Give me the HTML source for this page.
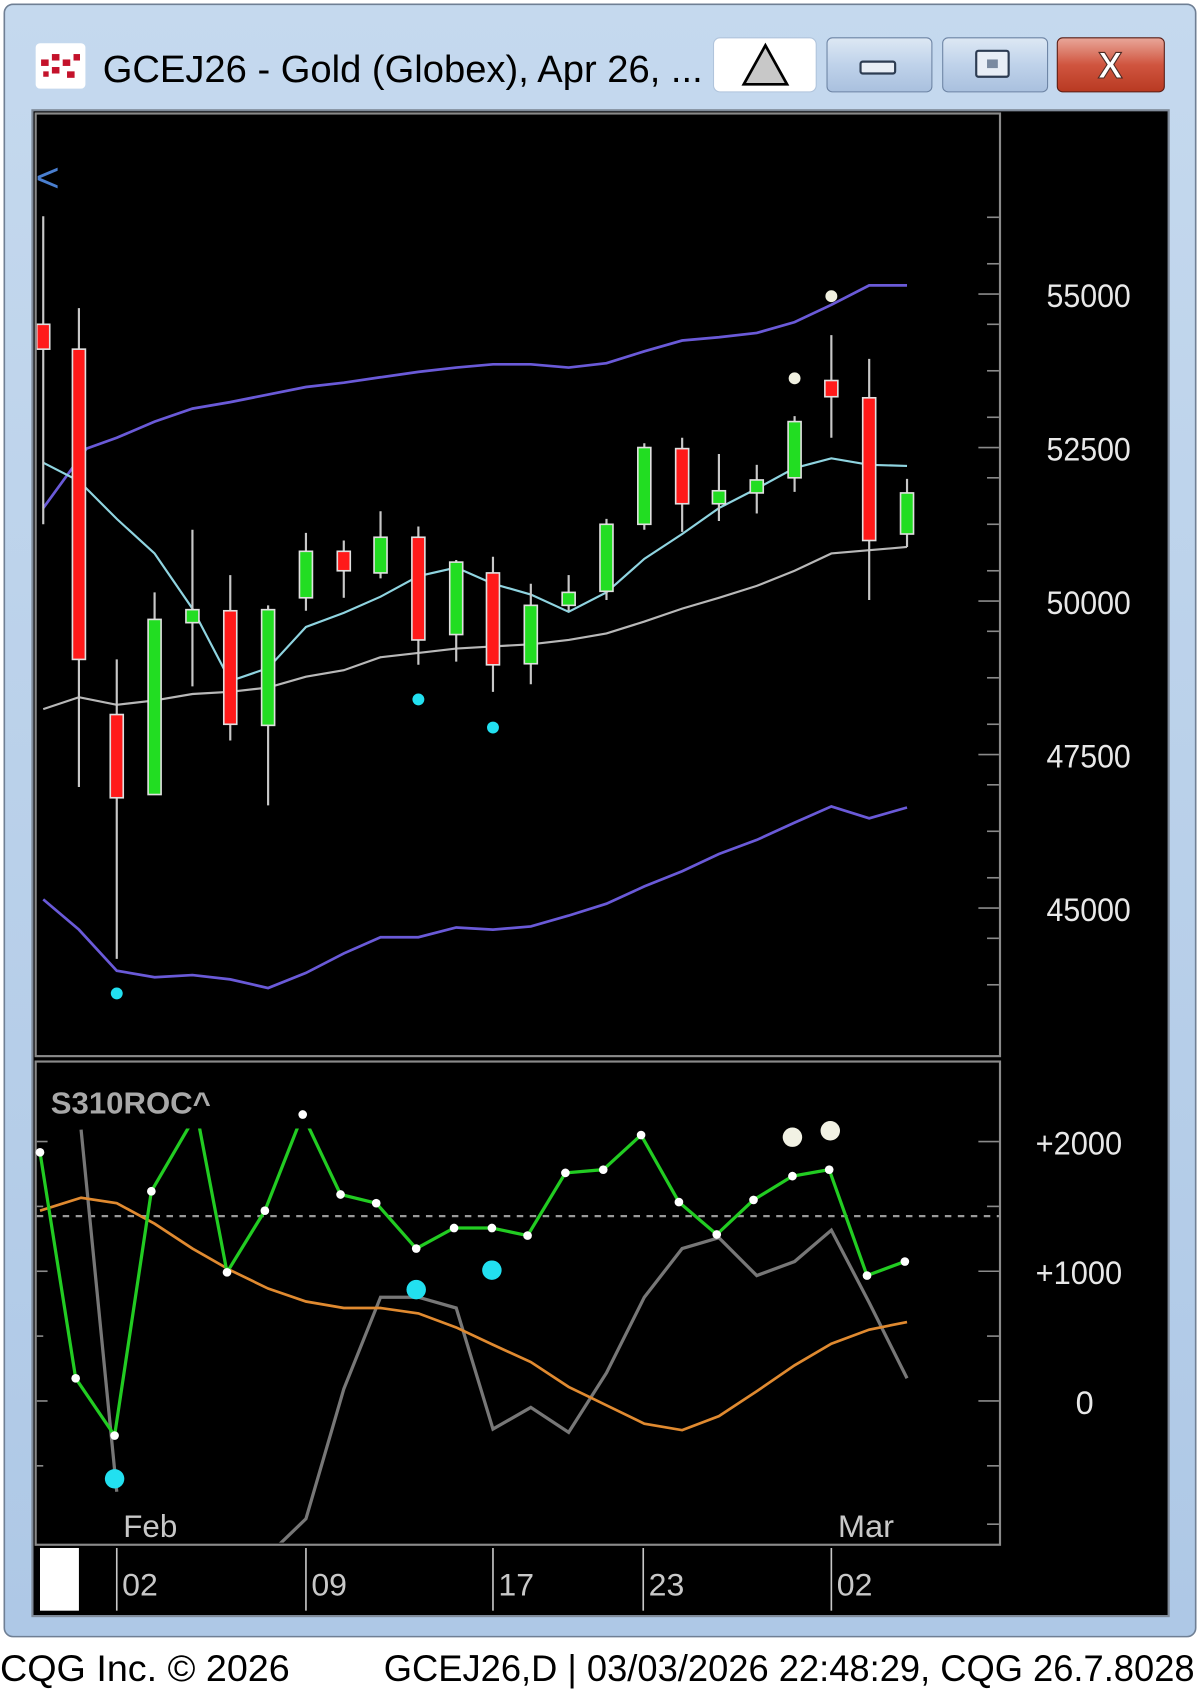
<!DOCTYPE html>
<html><head><meta charset="utf-8"><style>
html,body{margin:0;padding:0;background:#fff;width:1200px;height:1695px;overflow:hidden}
svg{display:block}
</style></head><body>
<svg width="1200" height="1695" viewBox="0 0 1110 1568" preserveAspectRatio="none" xmlns="http://www.w3.org/2000/svg" font-family="Liberation Sans, sans-serif">
<defs>
<linearGradient id="tb" x1="0" y1="0" x2="0" y2="1"><stop offset="0" stop-color="#c5d9ee"/><stop offset="1" stop-color="#aec8e6"/></linearGradient>
<linearGradient id="btn" x1="0" y1="0" x2="0" y2="1"><stop offset="0" stop-color="#dde8f4"/><stop offset="0.5" stop-color="#bfd2ea"/><stop offset="1" stop-color="#a9c0de"/></linearGradient>
<linearGradient id="cls" x1="0" y1="0" x2="0" y2="1"><stop offset="0" stop-color="#e9a79a"/><stop offset="0.5" stop-color="#d0553f"/><stop offset="1" stop-color="#b83a22"/></linearGradient>
<clipPath id="cm"><rect x="34" y="106" width="890" height="870"/></clipPath>
<clipPath id="cs"><rect x="34" y="1044" width="890" height="383"/></clipPath>
</defs>
<rect x="0" y="0" width="1110" height="1568" fill="#fff"/>
<rect x="4" y="4" width="1102" height="1510" rx="8" fill="url(#tb)" stroke="#6f7f94" stroke-width="1.5"/>
<!-- icon -->
<rect x="33" y="40" width="46" height="42" rx="4" fill="#fff"/>
<g fill="#c4122b"><rect x="38" y="55" width="7" height="6"/><rect x="48" y="50" width="7" height="6"/><rect x="58" y="55" width="7" height="6"/><rect x="68" y="50" width="6" height="6"/><rect x="48" y="62" width="7" height="6"/><rect x="62" y="66" width="7" height="6"/><rect x="40" y="66" width="5" height="5"/></g>
<text x="95" y="76" font-size="35" fill="#000" textLength="555" lengthAdjust="spacingAndGlyphs">GCEJ26 - Gold (Globex), Apr 26, ...</text>
<!-- buttons -->
<rect x="660" y="35" width="95" height="50" rx="6" fill="#fff" stroke="#b0c4dc"/>
<path d="M708 42 L728 78 L688 78 Z" fill="#c8c8c8" stroke="#000" stroke-width="2.5"/>
<rect x="765" y="35" width="97" height="50" rx="5" fill="url(#btn)" stroke="#6d84a4"/>
<rect x="796" y="57" width="32" height="11" rx="2" fill="#e8eef6" stroke="#2d3c52" stroke-width="2"/>
<rect x="872" y="35" width="97" height="50" rx="5" fill="url(#btn)" stroke="#6d84a4"/>
<rect x="903" y="47" width="30" height="24" rx="2" fill="#e8eef6" stroke="#2d3c52" stroke-width="2"/>
<rect x="913" y="55" width="10" height="8" fill="#7a8aa0"/>
<rect x="978" y="35" width="99" height="50" rx="5" fill="url(#cls)" stroke="#5a1d14"/>
<text x="1027" y="72" font-size="34" font-weight="bold" fill="#fff" text-anchor="middle" stroke="#4a2a24" stroke-width="1">X</text>
<!-- chart area -->
<rect x="30" y="102" width="1051" height="1393" fill="#000" stroke="#7f8a98" stroke-width="2"/>
<rect x="33" y="105" width="892" height="872" fill="none" stroke="#8a8a8a" stroke-width="2"/>
<rect x="33" y="982" width="892" height="447" fill="none" stroke="#8a8a8a" stroke-width="2"/>
<!-- right ticks main -->
<g stroke="#8a8a8a" stroke-width="1.5">
<line x1="905" y1="272" x2="924" y2="272"/><line x1="905" y1="414" x2="924" y2="414"/><line x1="905" y1="556" x2="924" y2="556"/><line x1="905" y1="698" x2="924" y2="698"/><line x1="905" y1="840" x2="924" y2="840"/>
<line x1="913" y1="201" x2="924" y2="201"/><line x1="913" y1="343" x2="924" y2="343"/><line x1="913" y1="485" x2="924" y2="485"/><line x1="913" y1="627" x2="924" y2="627"/><line x1="913" y1="769" x2="924" y2="769"/><line x1="913" y1="911" x2="924" y2="911"/>
<line x1="913" y1="244" x2="924" y2="244"/><line x1="913" y1="300" x2="924" y2="300"/><line x1="913" y1="386" x2="924" y2="386"/><line x1="913" y1="442" x2="924" y2="442"/><line x1="913" y1="528" x2="924" y2="528"/><line x1="913" y1="584" x2="924" y2="584"/><line x1="913" y1="670" x2="924" y2="670"/><line x1="913" y1="726" x2="924" y2="726"/><line x1="913" y1="812" x2="924" y2="812"/><line x1="913" y1="868" x2="924" y2="868"/>
<line x1="905" y1="1056" x2="924" y2="1056"/><line x1="905" y1="1176" x2="924" y2="1176"/><line x1="905" y1="1296" x2="924" y2="1296"/>
<line x1="913" y1="1116" x2="924" y2="1116"/><line x1="913" y1="1236" x2="924" y2="1236"/><line x1="913" y1="1356" x2="924" y2="1356"/><line x1="913" y1="1410" x2="924" y2="1410"/>
<line x1="34" y1="1056" x2="44" y2="1056"/><line x1="34" y1="1176" x2="44" y2="1176"/><line x1="34" y1="1296" x2="44" y2="1296"/><line x1="34" y1="1236" x2="40" y2="1236"/><line x1="34" y1="1356" x2="40" y2="1356"/><line x1="34" y1="1116" x2="40" y2="1116"/>
</g>
<g font-size="30" fill="#e8e8e8" lengthAdjust="spacingAndGlyphs">
<text x="968" y="284" textLength="78" lengthAdjust="spacingAndGlyphs">55000</text><text x="968" y="426" textLength="78" lengthAdjust="spacingAndGlyphs">52500</text><text x="968" y="568" textLength="78" lengthAdjust="spacingAndGlyphs">50000</text><text x="968" y="710" textLength="78" lengthAdjust="spacingAndGlyphs">47500</text><text x="968" y="852" textLength="78" lengthAdjust="spacingAndGlyphs">45000</text>
<text x="958" y="1068" textLength="80" lengthAdjust="spacingAndGlyphs">+2000</text><text x="958" y="1188" textLength="80" lengthAdjust="spacingAndGlyphs">+1000</text><text x="995" y="1308">0</text>
</g>
<text x="33" y="177" font-size="38" fill="#4a7fd0">&lt;</text>
<g clip-path="url(#cm)">
<polyline fill="none" stroke="#6a5ad8" stroke-width="2.5" points="40,470 80,415 108,405 143,390 178,378 213,372 248,365 283,358 318,354 352,349 387,344 422,340 456,337 491,337 526,340 561,336 596,325 631,315 665,312 700,308 735,298 769,282 804,264 839,264"/>
<polyline fill="none" stroke="#6a5ad8" stroke-width="2.5" points="40,832 73,860 108,898 143,904 178,902 213,906 248,914 283,900 318,882 352,867 387,867 422,858 456,860 491,857 526,847 561,836 596,820 631,806 665,790 700,777 735,761 769,746 804,757 839,747"/>
<polyline fill="none" stroke="#8fd4e0" stroke-width="2" points="40,428 73,445 108,480 143,512 178,563 213,630 248,618 283,580 318,567 352,552 387,533 422,525 456,540 491,550 526,566 561,548 596,517 631,494 665,470 700,452 735,433 769,424 804,430 839,431"/>
<polyline fill="none" stroke="#b8b8b8" stroke-width="2" points="40,656 73,645 108,652 143,648 178,642 213,640 248,636 283,626 318,620 352,608 387,604 422,600 456,598 491,596 526,592 561,586 596,575 631,563 665,553 700,542 735,528 769,512 804,509 839,506"/>
<g stroke="#c8c8c8" stroke-width="2">
<line x1="40" y1="200" x2="40" y2="485"/><line x1="73" y1="285" x2="73" y2="728"/><line x1="108" y1="610" x2="108" y2="887"/><line x1="143" y1="548" x2="143" y2="735"/><line x1="178" y1="490" x2="178" y2="635"/><line x1="213" y1="532" x2="213" y2="685"/><line x1="248" y1="560" x2="248" y2="745"/><line x1="283" y1="493" x2="283" y2="565"/><line x1="318" y1="500" x2="318" y2="553"/><line x1="352" y1="473" x2="352" y2="535"/><line x1="387" y1="487" x2="387" y2="615"/><line x1="422" y1="518" x2="422" y2="612"/><line x1="456" y1="515" x2="456" y2="640"/><line x1="491" y1="540" x2="491" y2="633"/><line x1="526" y1="532" x2="526" y2="565"/><line x1="561" y1="480" x2="561" y2="555"/><line x1="596" y1="410" x2="596" y2="490"/><line x1="631" y1="405" x2="631" y2="492"/><line x1="665" y1="420" x2="665" y2="482"/><line x1="700" y1="430" x2="700" y2="475"/><line x1="735" y1="385" x2="735" y2="455"/><line x1="769" y1="310" x2="769" y2="405"/><line x1="804" y1="332" x2="804" y2="555"/><line x1="839" y1="443" x2="839" y2="506"/>
</g>
<g stroke="#e0e0e0" stroke-width="1.5">
<g fill="#ff1a1a">
<rect x="34" y="300" width="12" height="23"/><rect x="67" y="323" width="12" height="287"/><rect x="102" y="661" width="12" height="77"/><rect x="207" y="565" width="12" height="105"/><rect x="312" y="510" width="12" height="18"/><rect x="381" y="497" width="12" height="95"/><rect x="450" y="530" width="12" height="85"/><rect x="625" y="415" width="12" height="51"/><rect x="763" y="352" width="12" height="15"/><rect x="798" y="368" width="12" height="132"/>
</g>
<g fill="#22dd22">
<rect x="137" y="573" width="12" height="162"/><rect x="172" y="564" width="12" height="12"/><rect x="242" y="564" width="12" height="107"/><rect x="277" y="510" width="12" height="43"/><rect x="346" y="497" width="12" height="33"/><rect x="416" y="520" width="12" height="67"/><rect x="485" y="560" width="12" height="54"/><rect x="520" y="548" width="12" height="12"/><rect x="555" y="485" width="12" height="62"/><rect x="590" y="414" width="12" height="71"/><rect x="659" y="454" width="12" height="12"/><rect x="694" y="444" width="12" height="12"/><rect x="729" y="390" width="12" height="52"/><rect x="833" y="456" width="12" height="38"/>
</g>
</g>
<circle cx="769" cy="274" r="5.5" fill="#f0f0e0"/><circle cx="735" cy="350" r="5.5" fill="#f0f0e0"/>
<circle cx="387" cy="647" r="5.5" fill="#22e0f0"/><circle cx="456" cy="673" r="5.5" fill="#22e0f0"/><circle cx="108" cy="919" r="5.5" fill="#22e0f0"/>
</g>
<!-- sub panel -->
<text x="47" y="1030" font-size="28" font-weight="bold" fill="#a8a8a8" textLength="148" lengthAdjust="spacingAndGlyphs">S310ROC^</text>
<line x1="34" y1="1125" x2="924" y2="1125" stroke="#9a9a9a" stroke-width="2" stroke-dasharray="6,6"/>
<g clip-path="url(#cs)">
<polyline fill="none" stroke="#777" stroke-width="3" points="75,1045 108,1380"/>
<polyline fill="none" stroke="#777" stroke-width="3" points="255,1432 283,1405 318,1285 352,1200 387,1200 422,1210 456,1322 491,1302 526,1325 561,1270 596,1200 631,1155 665,1145 700,1180 735,1167 769,1138 804,1205 839,1275"/>
<polyline fill="none" stroke="#e08a30" stroke-width="2.5" points="37,1120 75,1108 108,1113 143,1132 178,1155 213,1175 248,1192 283,1204 318,1210 352,1210 387,1215 422,1228 456,1244 491,1260 526,1283 561,1300 596,1317 631,1323 665,1310 700,1287 735,1263 769,1243 804,1230 839,1223"/>
<polyline fill="none" stroke="#22cc22" stroke-width="3" points="37,1066 70,1275 106,1328 140,1102 182,1030 210,1177 245,1120 280,1031 315,1105 348,1113 385,1155 420,1136 455,1136 488,1143 523,1085 558,1082 593,1050 628,1112 663,1142 697,1110 733,1088 767,1082 802,1180 837,1167"/>
</g>
<g fill="#fff">
<circle cx="37" cy="1066" r="4"/><circle cx="70" cy="1275" r="4"/><circle cx="106" cy="1328" r="4"/><circle cx="140" cy="1102" r="4"/><circle cx="210" cy="1177" r="4"/><circle cx="245" cy="1120" r="4"/><circle cx="280" cy="1031" r="4"/><circle cx="315" cy="1105" r="4"/><circle cx="348" cy="1113" r="4"/><circle cx="385" cy="1155" r="4"/><circle cx="420" cy="1136" r="4"/><circle cx="455" cy="1136" r="4"/><circle cx="488" cy="1143" r="4"/><circle cx="523" cy="1085" r="4"/><circle cx="558" cy="1082" r="4"/><circle cx="593" cy="1050" r="4"/><circle cx="628" cy="1112" r="4"/><circle cx="663" cy="1142" r="4"/><circle cx="697" cy="1110" r="4"/><circle cx="733" cy="1088" r="4"/><circle cx="767" cy="1082" r="4"/><circle cx="802" cy="1180" r="4"/><circle cx="837" cy="1167" r="4"/>
</g>
<circle cx="733" cy="1052" r="9" fill="#f2f2e4"/><circle cx="768" cy="1046" r="9" fill="#f2f2e4"/>
<circle cx="385" cy="1193" r="9" fill="#22e0f0"/><circle cx="455" cy="1175" r="9" fill="#22e0f0"/><circle cx="106" cy="1368" r="9" fill="#22e0f0"/>
<g font-size="29" fill="#c8c8c8">
<text x="114" y="1422" textLength="50" lengthAdjust="spacingAndGlyphs">Feb</text><text x="775" y="1422" textLength="52" lengthAdjust="spacingAndGlyphs">Mar</text>
</g>
<!-- date axis -->
<rect x="37" y="1432" width="36" height="58" fill="#fff"/>
<g stroke="#c8c8c8" stroke-width="1.5">
<line x1="108" y1="1432" x2="108" y2="1490"/><line x1="283" y1="1432" x2="283" y2="1490"/><line x1="456" y1="1432" x2="456" y2="1490"/><line x1="595" y1="1432" x2="595" y2="1490"/><line x1="769" y1="1432" x2="769" y2="1490"/>
</g>
<g font-size="29" fill="#c8c8c8">
<text x="113" y="1476" textLength="33" lengthAdjust="spacingAndGlyphs">02</text><text x="288" y="1476" textLength="33" lengthAdjust="spacingAndGlyphs">09</text><text x="461" y="1476" textLength="33" lengthAdjust="spacingAndGlyphs">17</text><text x="600" y="1476" textLength="33" lengthAdjust="spacingAndGlyphs">23</text><text x="774" y="1476" textLength="33" lengthAdjust="spacingAndGlyphs">02</text>
</g>
<!-- footer -->
<rect x="0" y="1516" width="1110" height="52" fill="#fff"/>
<text x="0" y="1555" font-size="34" fill="#000" textLength="268" lengthAdjust="spacingAndGlyphs">CQG Inc. © 2026</text>
<text x="355" y="1555" font-size="34" fill="#000" textLength="750" lengthAdjust="spacingAndGlyphs">GCEJ26,D | 03/03/2026 22:48:29, CQG 26.7.8028</text>
</svg>
</body></html>
